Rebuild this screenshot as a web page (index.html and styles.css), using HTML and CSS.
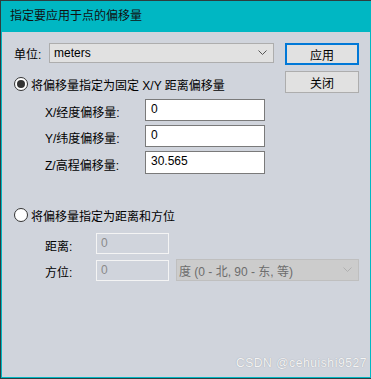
FILE: index.html
```html
<!DOCTYPE html>
<html>
<head>
<meta charset="utf-8">
<link rel="stylesheet" href="styles.css">
</head>
<body>
<div class="window">
  <div class="titlebar">指定要应用于点的偏移量</div>
  <div class="content">
    <div class="top">
      <div class="left">
        <div class="units-row">
          <span class="lbl">单位:</span>
          <div class="select">
            <span>meters</span>
            <svg class="chev" width="9" height="6" viewBox="0 0 9 6"><path d="M0.5 0.5 L4.5 4.5 L8.5 0.5" fill="none" stroke="#555" stroke-width="1"/></svg>
          </div>
        </div>
        <div class="radio-row r1">
          <span class="radio checked"></span>
          <span>将偏移量指定为固定 X/Y 距离偏移量</span>
        </div>
        <div class="fields">
          <div class="field"><span class="flabel">X/经度偏移量:</span><div class="input">0</div></div>
          <div class="field"><span class="flabel">Y/纬度偏移量:</span><div class="input">0</div></div>
          <div class="field"><span class="flabel">Z/高程偏移量:</span><div class="input">30.565</div></div>
        </div>
      </div>
      <div class="buttons">
        <div class="btn default">应用</div>
        <div class="btn">关闭</div>
      </div>
    </div>
    <div class="radio-row r2">
      <span class="radio"></span>
      <span>将偏移量指定为距离和方位</span>
    </div>
    <div class="fields2">
      <div class="field2"><span class="flabel2">距离:</span><div class="input dis">0</div></div>
      <div class="field2"><span class="flabel2">方位:</span><div class="input dis">0</div>
        <div class="select dis-select">
          <span>度 (0 - 北, 90 - 东, 等)</span>
          <svg class="chev" width="9" height="6" viewBox="0 0 9 6"><path d="M0.5 0.5 L4.5 4.5 L8.5 0.5" fill="none" stroke="#b0b0b0" stroke-width="1"/></svg>
        </div>
      </div>
    </div>
    <div class="watermark">CSDN @cehuishi9527</div>
  </div>
</div>
</body>
</html>
```

FILE: styles.css
```css
html, body {
  margin: 0;
  padding: 0;
  background: #2e3d3f;
}
body {
  width: 371px;
  height: 379px;
  overflow: hidden;
  font-family: "Liberation Sans", "Noto Sans CJK SC", sans-serif;
  font-size: 12px;
  color: #000;
}
.window {
  margin: 1px 0 0 1px;
  width: 368px;
  height: 376px;
  border: 1px solid #00b7c3;
  border-top: none;
  background: #d0d4dc;
  display: flex;
  flex-direction: column;
}
.titlebar {
  height: 31px;
  background: #00b7c3;
  line-height: 31px;
  padding-left: 9px;
  font-size: 12px;
  margin: 0 -1px;
  color: #111;
}
.content {
  flex: 1;
  padding: 11px 0 0 11px;
  display: flex;
  flex-direction: column;
}
.top {
  display: flex;
}
.left {
  width: 262px;
}
.units-row {
  display: flex;
  align-items: center;
  height: 20px;
}
.lbl {
  width: 35px;
  padding-left: 1px;
}
.select {
  box-sizing: border-box;
  width: 225px;
  height: 20px;
  background: #e1e1e1;
  border: 1px solid #adadad;
  display: flex;
  align-items: center;
  justify-content: space-between;
  padding: 0 6px 0 4px;
}
.chev { display: block; }
.radio-row {
  display: flex;
  align-items: center;
  height: 14px;
  gap: 3px;
  padding-left: 1px;
}
.r1 { margin-top: 14px; }
.radio {
  box-sizing: border-box;
  width: 14px;
  height: 14px;
  border-radius: 50%;
  border: 1px solid #333;
  background: #fff;
  display: flex;
  align-items: center;
  justify-content: center;
}
.radio.checked::after {
  content: "";
  width: 8px;
  height: 8px;
  border-radius: 50%;
  background: #333;
}
.fields {
  margin-top: 8px;
  display: flex;
  flex-direction: column;
  gap: 4px;
  padding-left: 32px;
}
.field {
  display: flex;
  align-items: center;
}
.flabel {
  width: 100px;
  padding-top: 3px;
}
.input {
  box-sizing: border-box;
  width: 120px;
  height: 22px;
  background: #fff;
  border: 1px solid #7a7a7a;
  padding: 0 5px;
  line-height: 19px;
}
.fields .field:last-child .input { height: 23px; }
.buttons {
  margin-left: 10px;
  display: flex;
  flex-direction: column;
  gap: 6px;
}
.btn {
  box-sizing: border-box;
  width: 74px;
  height: 22px;
  background: #e1e1e1;
  border: 1px solid #adadad;
  display: flex;
  align-items: center;
  justify-content: center;
}
.btn.default {
  border: 2px solid #0078d7;
}
.r2 { margin-top: 34px; }
.fields2 {
  margin-top: 11px;
  padding-left: 32px;
  display: flex;
  flex-direction: column;
  gap: 5px;
}
.field2 {
  display: flex;
  align-items: center;
}
.flabel2 {
  width: 51px;
  padding-top: 3px;
}
.input.dis {
  width: 73px;
  height: 21px;
  background: #d0d4dc;
  border: 1px solid #f4f4f4;
  color: #8a8a8a;
  padding: 0 4px;
}
.dis-select {
  width: 183px;
  height: 22px;
  margin-left: 7px;
  background: #cccccc;
  border: 1px solid #bfbfbf;
  color: #6d6d6d;
  padding: 0 6px 0 2px;
}
.watermark {
  margin-top: auto;
  align-self: flex-end;
  margin-right: 3px;
  margin-bottom: 7px;
  font-size: 12px;
  letter-spacing: 0.6px;
  color: #f4f4f4;
  text-shadow: 0 0 1px #8f959e;
}
```
